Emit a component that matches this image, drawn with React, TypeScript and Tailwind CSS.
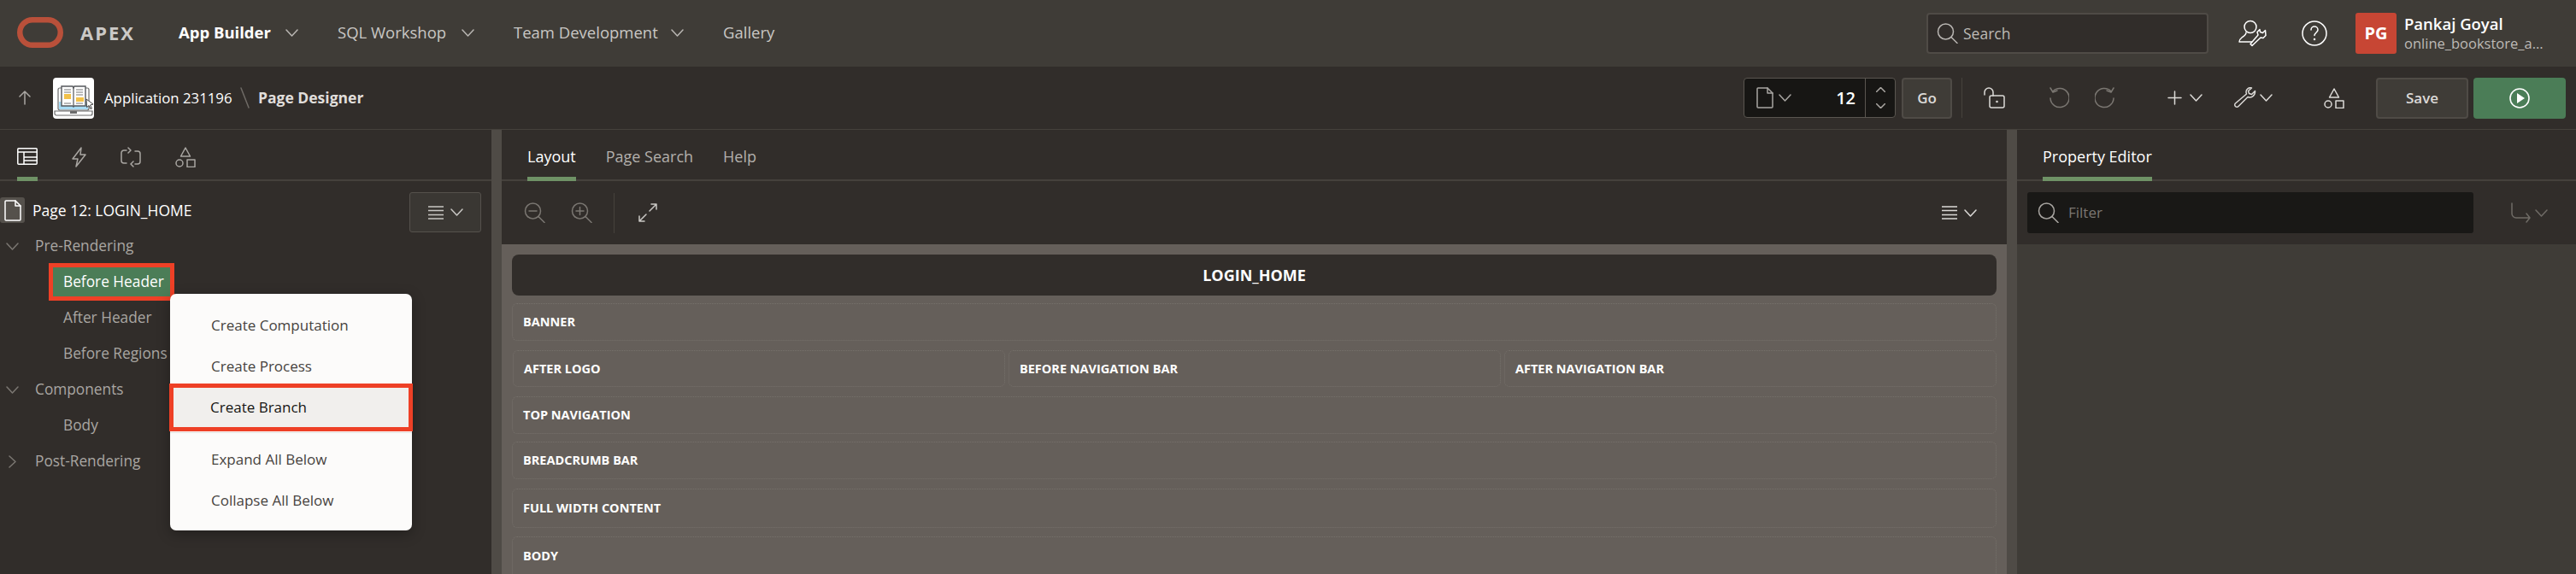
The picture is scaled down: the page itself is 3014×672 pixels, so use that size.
import type { ReactNode } from 'react';

const FONT = "font-['Open_Sans','Noto_Sans',sans-serif]";

function Icon({ w, h, vb, className, children }: { w: number; h: number; vb: string; className?: string; children: ReactNode }) {
  return (
    <svg
      width={w}
      height={h}
      viewBox={vb}
      fill="none"
      stroke="currentColor"
      strokeWidth="1.5"
      strokeLinecap="round"
      strokeLinejoin="round"
      className={className}
    >
      {children}
    </svg>
  );
}

function Chevron({ className = 'text-[#b9b6b2]', dir = 'down' }: { className?: string; dir?: 'down' | 'up' | 'right' }) {
  const d = dir === 'down' ? 'M1 1l6.5 7L14 1' : dir === 'up' ? 'M1 8l6.5-7L14 8' : 'M1 1l7 6.5L1 14';
  const size = dir === 'right' ? [9, 15, '0 0 9 15'] : [15, 9, '0 0 15 9'];
  return (
    <Icon w={size[0] as number} h={size[1] as number} vb={size[2] as string} className={`shrink-0 ${className}`}>
      <path d={d} />
    </Icon>
  );
}

function PageIcon({ className }: { className?: string }) {
  return (
    <Icon w={20} h={25} vb="0 0 20 25" className={className}>
      <path d="M2 1h11l6 6v16a1 1 0 0 1-1 1H2a1 1 0 0 1-1-1V2a1 1 0 0 1 1-1z" />
      <path d="M13 1v6h6" />
    </Icon>
  );
}

function Shapes({ className }: { className?: string }) {
  return (
    <Icon w={24} h={24} vb="0 0 24 24" className={className}>
      <path d="M12 1l5.5 10h-11z" />
      <circle cx="5" cy="19" r="4" />
      <rect x="14" y="15" width="9" height="8.5" />
    </Icon>
  );
}

function Magnifier({ children, className }: { children?: ReactNode; className?: string }) {
  return (
    <Icon w={25} h={24} vb="0 0 25 24" className={className}>
      <circle cx="10.5" cy="10" r="9" />
      <path d="M17 16.5l7 7" />
      {children}
    </Icon>
  );
}

function Hamburger({ className }: { className?: string }) {
  return (
    <Icon w={18} h={16} vb="0 0 18 16" className={className}>
      <path d="M0 1h18M0 5.500h18M0 10.500h18M0 15h18" />
    </Icon>
  );
}

function Divider({ className = 'h-[47px]' }: { className?: string }) {
  return <div className={`w-px shrink-0 bg-[#45413c] ${className}`} />;
}

function AppIcon() {
  return (
    <div className="h-[48px] w-[48px] shrink-0 overflow-hidden rounded-[4px] bg-white">
      <svg width="48" height="48" viewBox="0 0 48 48" fill="none">
        <rect x="6" y="12" width="36" height="26" rx="2" fill="#fff" stroke="#6b6b6b" strokeWidth="1.2" />
        <rect x="7" y="28" width="34" height="9" fill="#a8dcf5" />
        <path d="M10 10h13l1 2 1-2h13v23H25l-1 1-1-1H10z" fill="#fff" stroke="#55585c" strokeWidth="1.4" />
        <path d="M24 11v22" stroke="#55585c" strokeWidth="1.2" />
        <path d="M13 14h8M13 17h8M27 14h8M27 17h8M27 20h8M13 30h8M27 30h8" stroke="#777" strokeWidth="1" />
        <rect x="13" y="19" width="8" height="6" fill="#f2c14a" />
        <rect x="27" y="23" width="9" height="5" fill="#f2c14a" />
        <path d="M2 39h44v3a2 2 0 0 1-2 2H4a2 2 0 0 1-2-2z" fill="#fff" stroke="#6b6b6b" strokeWidth="1.2" />
        <rect x="20" y="39" width="8" height="3" fill="#6b6b6b" />
        <path d="M39 25l8 6-3.500 1 2 4-1.500.6-2-4-2.500 2z" fill="#fff" stroke="#444" strokeWidth="1" />
      </svg>
    </div>
  );
}

function TopBar() {
  return (
    <header className="flex h-[78px] items-center bg-[#3f3c37] pb-[2px] pl-[20px]">
      <svg width="54" height="36" viewBox="0 0 54 36" fill="none" className="shrink-0">
        <rect x="3.250" y="3.250" width="47.500" height="29.500" rx="14.750" stroke="#b9503a" strokeWidth="6.500" />
      </svg>
      <span className="ml-[20px] w-[115px] text-[22px] font-bold tracking-[2px] text-[#cbc9c6]">APEX</span>
      <span className="w-[125px] text-[18.500px] font-bold text-white">App Builder</span>
      <Chevron />
      <span className="ml-[46px] w-[145px] text-[18.500px] text-[#c9c7c4]">SQL Workshop</span>
      <Chevron />
      <span className="ml-[46px] w-[184px] text-[18.500px] text-[#c9c7c4]">Team Development</span>
      <Chevron />
      <span className="ml-[46px] text-[18.500px] text-[#c9c7c4]">Gallery</span>
      <div className="ml-auto flex items-center pt-[2px]">
        <div className="flex h-[48px] w-[330px] items-center rounded-[4px] border-2 border-[#4f4b46] bg-[#312d2a] pl-[10px]">
          <Magnifier className="text-[#b9b6b2]" />
          <span className="ml-[6px] text-[17.500px] text-[#bdbab6]">Search</span>
        </div>
        <Icon w={33} h={32} vb="0 0 33 32" className="ml-[35px] text-white">
          <circle cx="14" cy="8.500" r="7" />
          <path d="M9 15c0 3-2 4-5 6-2 1.500-3 3-3 5h15" />
          <path d="M31.500 12.500l-3 3-3-1-.5-3-3 3 1 3.500-9 10.500 2 2 10-9.500 3 .5 3-3z" fill="#3f3c37" />
        </Icon>
        <Icon w={30} h={30} vb="0 0 30 30" className="ml-[41px] text-white">
          <circle cx="15" cy="15" r="14" />
          <path d="M11 11c0-2.500 2-4 4-4s4 1.500 4 4-4 3.500-4 6.500" />
          <circle cx="15" cy="22" r=".5" />
        </Icon>
        <div className="ml-[33px] flex h-[48px] w-[48px] items-center justify-center rounded-[3px] bg-[#c74634] text-[20px] font-bold text-white">
          PG
        </div>
        <div className="ml-[9px] w-[201px] leading-none">
          <div className="text-[18.500px] font-semibold text-white">Pankaj Goyal</div>
          <div className="mt-[6px] text-[16.500px] text-[#bdbab6]">online_bookstore_a...</div>
        </div>
      </div>
    </header>
  );
}

function PageToolbar() {
  return (
    <div className="flex h-[74px] items-center border-b border-[#45413c] bg-[#312d2a] pl-[22px]">
      <Icon w={14} h={17} vb="0 0 14 17" className="shrink-0 text-[#a9a6a2]">
        <path d="M7 16V1M1 7l6-6 6 6" />
      </Icon>
      <div className="ml-[26px]">
        <AppIcon />
      </div>
      <span className="ml-[12px] w-[159px] text-[16.800px] text-white">Application 231196</span>
      <Icon w={11} h={25} vb="0 0 11 25" className="shrink-0 text-[#6f6b66]">
        <path d="M1 1l9 23" />
      </Icon>
      <span className="ml-[10px] text-[17.500px] font-bold text-[#e0dedb]">Page Designer</span>
      <div className="ml-auto flex items-center pr-[12px]">
        <div className="flex h-[47px] w-[178px] items-center rounded-[4px] border border-[#5a5650] bg-[#171614] pl-[14px]">
          <PageIcon className="text-[#a9a6a2]" />
          <Chevron className="ml-[6px] text-[#a9a6a2]" />
          <span className="ml-auto mr-[11px] text-[20px] font-semibold text-white">12</span>
          <div className="flex h-full w-[35px] flex-col items-center justify-center gap-[13px] border-l border-[#5a5650]">
            <Icon w={11} h={6} vb="0 0 11 6" className="text-[#a9a6a2]">
              <path d="M.5 5.500l5-5 5 5" />
            </Icon>
            <Icon w={11} h={6} vb="0 0 11 6" className="text-[#a9a6a2]">
              <path d="M.5.500l5 5 5-5" />
            </Icon>
          </div>
        </div>
        <button className="ml-[7px] h-[48px] w-[59px] rounded-[4px] border-2 border-[#4f4b46] bg-[#3f3c37] text-[17px] font-semibold text-[#dcdad7]">
          Go
        </button>
        <Divider className="ml-[11px] h-[47px]" />
        <Icon w={25} h={25} vb="0 0 25 25" className="ml-[25px] text-[#dcdad7]">
          <path d="M1 9V6a5 5 0 0 1 10 0v4" />
          <rect x="7" y="10" width="17" height="14" rx="2" />
          <circle cx="15.500" cy="17" r=".6" />
        </Icon>
        <Divider className="ml-[25px]" />
        <Icon w={24} h={25} vb="0 0 24 25" className="ml-[25px] text-[#7b7772]">
          <path d="M5 5a11 11 0 1 1-3 8" />
          <path d="M2 1l3 5 5-2" />
        </Icon>
        <Icon w={24} h={25} vb="0 0 24 25" className="ml-[30px] text-[#7b7772]">
          <path d="M19 5a11 11 0 1 0 3 8" />
          <path d="M22 1l-3 5-5-2" />
        </Icon>
        <Divider className="ml-[27px]" />
        <Icon w={17} h={17} vb="0 0 17 17" className="ml-[33px] text-[#dcdad7]">
          <path d="M8.500 1v15M1 8.500h15" />
        </Icon>
        <Chevron className="ml-[9px] text-[#dcdad7]" />
        <Icon w={26} h={25} vb="0 0 26 25" className="ml-[37px] text-[#dcdad7]">
          <path d="M24.500 4.500l-4 4-3-1-1-3 4-3.500c-3-1-6.500 1-6.500 4.500 0 1 .2 1.500.5 2.500L1.500 19c-1 1-1 2.500 0 3.500s2.500 1 3.500 0l11-11c3.500 1.500 9-1 8.500-7z" />
        </Icon>
        <Chevron className="ml-[4px] text-[#dcdad7]" />
        <Divider className="ml-[33px]" />
        <Shapes className="ml-[26px] text-[#dcdad7]" />
        <Divider className="ml-[26px]" />
        <button className="ml-[10px] h-[48px] w-[108px] rounded-[4px] border-2 border-[#4f4b46] bg-[#3f3c37] text-[17px] font-semibold text-[#dcdad7]">
          Save
        </button>
        <button className="ml-[6px] flex h-[48px] w-[108px] items-center justify-center rounded-[4px] bg-[#4b7d57]">
          <svg width="24" height="24" viewBox="0 0 24 24" fill="none">
            <circle cx="12" cy="12" r="11" stroke="#fff" strokeWidth="1.6" />
            <path d="M9 6l9 6-9 6z" fill="#fff" />
          </svg>
        </button>
      </div>
    </div>
  );
}

function TabBar({ children, className = '' }: { children: ReactNode; className?: string }) {
  return <div className={`flex h-[60px] shrink-0 items-stretch border-b-2 border-[#45413c] ${className}`}>{children}</div>;
}

function Tab({ label, active, className = '' }: { label: string; active?: boolean; className?: string }) {
  return (
    <div
      className={`-mb-[2px] flex items-center border-b-[5px] pt-[7px] text-[18px] ${active ? 'border-[#6f9266] text-white' : 'border-transparent text-[#b3b0ac]'} ${className}`}
    >
      {label}
    </div>
  );
}

function TreeRow({ label, level, open }: { label: string; level: 0 | 1; open?: boolean }) {
  if (level === 1) {
    return <div className="flex h-[42px] items-center pl-[74px] text-[17.300px] text-[#a9a6a2]">{label}</div>;
  }
  return (
    <div className="flex h-[42px] items-center text-[17.300px] text-[#a9a6a2]">
      <div className="flex w-[41px] justify-center pr-[13px]">
        <Chevron className="text-[#7b7772]" dir={open ? 'down' : 'right'} />
      </div>
      {label}
    </div>
  );
}

function LeftPanel() {
  return (
    <aside className="flex w-[575px] shrink-0 flex-col bg-[#312d2a]">
      <TabBar className="gap-[40px] pl-[20px]">
        <div className="-mb-[2px] flex items-start border-b-[5px] border-[#6f9266] pt-[21px]">
          <Icon w={24} h={20} vb="0 0 24 20" className="text-white">
            <rect x=".8" y=".8" width="22.400" height="18.400" rx="1" />
            <path d="M1 5h22M8 5v14M8 11h15M8 15h15" />
          </Icon>
        </div>
        <div className="pt-[20px]">
          <Icon w={17} h={24} vb="0 0 17 24" className="text-[#a9a6a2]">
            <path d="M11 1L1 14h6L5 23l11-14h-6z" />
          </Icon>
        </div>
        <div className="pt-[20px]">
          <Icon w={24} h={24} vb="0 0 24 24" className="text-[#a9a6a2]">
            <path d="M7 4H4a3 3 0 0 0-3 3v9a3 3 0 0 0 3 3h3M9 1l3 3-3 3M17 20h3a3 3 0 0 0 3-3V8a3 3 0 0 0-3-3h-3M15 23l-3-3 3-3" />
          </Icon>
        </div>
        <div className="pt-[20px]">
          <Shapes className="text-[#a9a6a2]" />
        </div>
      </TabBar>
      <div className="flex h-[53px] items-start pr-[12px] pt-[13px]">
        <div className="mt-[6px] flex h-[30px] w-[29px] items-center justify-center rounded-[3px] bg-[#55514c]">
          <PageIcon className="text-white" />
        </div>
        <span className="ml-[9px] mt-[8px] text-[17.500px] leading-[26px] text-white">Page 12: LOGIN_HOME</span>
        <button className="ml-auto flex h-[47px] w-[84px] items-center justify-center gap-[8px] rounded-[3px] border border-[#55514c] bg-[#3a3733] text-[#c9c7c4]">
          <Hamburger />
          <Chevron className="text-[#c9c7c4]" />
        </button>
      </div>
      <div className="pt-[2px]">
        <TreeRow label="Pre-Rendering" level={0} open />
        <div className="flex h-[42px] items-center">
          <div className="ml-[57px] flex h-[44px] w-[147px] items-center border-[5px] border-[#ee4026] bg-[#4b7d57] pl-[12px] text-[17.300px] font-medium text-white">
            Before Header
          </div>
        </div>
        <TreeRow label="After Header" level={1} />
        <TreeRow label="Before Regions" level={1} />
        <TreeRow label="Components" level={0} open />
        <TreeRow label="Body" level={1} />
        <TreeRow label="Post-Rendering" level={0} />
      </div>
    </aside>
  );
}

function Slot({ label, className = '' }: { label: string; className?: string }) {
  return (
    <div
      className={`flex rounded-[6px] border border-dotted border-[#76716b] pl-[12px] text-[14.500px] font-bold text-white ${className}`}
    >
      {label}
    </div>
  );
}

function CenterPanel() {
  return (
    <main className="flex min-w-0 flex-1 flex-col bg-[#312d2a]">
      <TabBar className="gap-[35px] pl-[30px]">
        <Tab label="Layout" active />
        <Tab label="Page Search" />
        <Tab label="Help" />
      </TabBar>
      <div className="flex h-[74px] shrink-0 items-center pl-[26px] pr-[35px]">
        <Magnifier className="text-[#7b7772]">
          <path d="M6 10h9" />
        </Magnifier>
        <Magnifier className="ml-[30px] text-[#7b7772]">
          <path d="M6 10h9M10.500 5.500v9" />
        </Magnifier>
        <Divider className="ml-[25px] h-[47px]" />
        <Icon w={22} h={22} vb="0 0 22 22" className="ml-[28px] text-[#c9c7c4]">
          <path d="M21 1L13 9M15 1h6v6M1 21l8-8M1 15v6h6" />
        </Icon>
        <Hamburger className="ml-auto text-[#dcdad7]" />
        <Chevron className="ml-[8px] text-[#dcdad7]" />
      </div>
      <div className="flex-1 bg-[#655f5a] px-[12px]">
        <div className="mt-[12px] flex h-[48px] items-center justify-center rounded-[8px] bg-[#312d2a] text-[18px] font-bold text-white">
          LOGIN_HOME
        </div>
        <Slot label="BANNER" className="mt-[9px] h-[44px] items-center" />
        <div className="mt-[11px] flex h-[43px] gap-[4px] pl-px">
          <Slot label="AFTER LOGO" className="flex-1 items-center" />
          <Slot label="BEFORE NAVIGATION BAR" className="flex-1 items-center" />
          <Slot label="AFTER NAVIGATION BAR" className="flex-1 items-center" />
        </div>
        <Slot label="TOP NAVIGATION" className="mt-[11px] h-[44px] items-center" />
        <Slot label="BREADCRUMB BAR" className="mt-[9px] h-[44px] items-center" />
        <Slot label="FULL WIDTH CONTENT" className="mt-[11px] h-[46px] items-center" />
        <Slot label="BODY" className="mt-[10px] h-[60px] items-start pt-[11px]" />
      </div>
    </main>
  );
}

function RightPanel() {
  return (
    <aside className="flex w-[654px] shrink-0 flex-col bg-[#312d2a]">
      <TabBar className="pl-[30px]">
        <Tab label="Property Editor" active />
      </TabBar>
      <div className="flex h-[74px] shrink-0 items-center pl-[12px]">
        <div className="flex h-[48px] w-[522px] items-center rounded-[3px] bg-[#191816] pl-[12px]">
          <Magnifier className="text-[#a9a6a2]" />
          <span className="ml-[11px] text-[17px] text-[#7b7772]">Filter</span>
        </div>
        <Icon w={23} h={24} vb="0 0 23 24" className="ml-[44px] text-[#6f6b66]">
          <path d="M1 1v12a5 5 0 0 0 5 5h16M18 13l4 5-4 5" />
        </Icon>
        <Chevron className="ml-[5px] text-[#6f6b66]" />
      </div>
      <div className="flex-1 bg-[#3f3c37]" />
    </aside>
  );
}

function MenuItem({ label, active }: { label: string; active?: boolean }) {
  if (active) {
    return (
      <div className="relative -mx-px -mt-[4px] flex h-[56px] items-center border-[5px] border-[#ee4026] bg-[#f1efed] pl-[43px] text-[#161513]">
        {label}
      </div>
    );
  }
  return <div className="flex h-[48px] items-center pl-[48px]">{label}</div>;
}

function ContextMenu() {
  return (
    <div className="absolute left-[199px] top-[344px] h-[277px] w-[283px] rounded-[7px] bg-[#fcfbfa] pt-[13px] text-[17px] text-[#47433f] shadow-[0_4px_16px_rgba(0,0,0,0.3)]">
      <MenuItem label="Create Computation" />
      <MenuItem label="Create Process" />
      <MenuItem label="Create Branch" active />
      <div className="mt-px h-px bg-[#e4e2df]" />
      <div className="mt-[7px]">
        <MenuItem label="Expand All Below" />
        <MenuItem label="Collapse All Below" />
      </div>
    </div>
  );
}

export default function App() {
  return (
    <div className={`relative flex h-[672px] w-[3014px] flex-col overflow-hidden bg-[#312d2a] ${FONT}`}>
      <TopBar />
      <PageToolbar />
      <div className="flex min-h-0 flex-1">
        <LeftPanel />
        <div className="w-[12px] shrink-0 bg-[#4f4b46]" />
        <CenterPanel />
        <div className="w-[12px] shrink-0 bg-[#4f4b46]" />
        <RightPanel />
      </div>
      <ContextMenu />
    </div>
  );
}
